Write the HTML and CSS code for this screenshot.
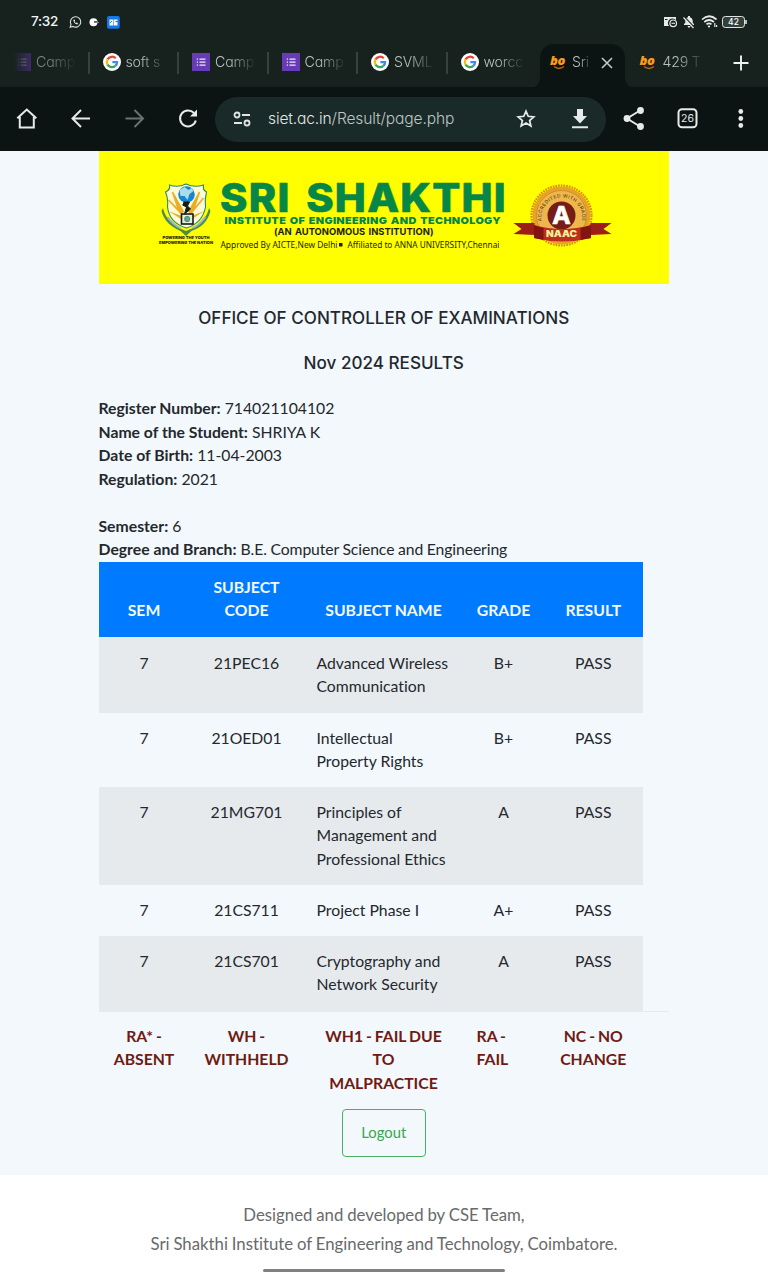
FILE: index.html
```html
<!DOCTYPE html>
<html lang="en">
<head>
<meta charset="utf-8">
<title>Exam Results</title>
<link rel="stylesheet" href="styles.css">
</head>
<body>
<svg class="defs" aria-hidden="true">
  <symbol id="google" viewBox="0 0 48 48">
    <circle cx="24" cy="24" r="24" fill="#fff"/>
    <g fill="none" stroke-width="6">
      <path d="M12 17A14 14 0 0 1 34 14" stroke="#ea4335"/>
      <path d="M12 31A14 14 0 0 1 12 17" stroke="#fbbc05"/>
      <path d="M33 34.500A14 14 0 0 1 12 31" stroke="#34a853"/>
      <path d="M25 24.500H37.500A14 14 0 0 1 33 34.500" stroke="#4285f4"/>
    </g>
  </symbol>
  <symbol id="forms" viewBox="0 0 18 18">
    <path d="M0 0H18V18H0Z" fill="#673ab7"/>
    <path d="M7.500 6.200H13.500M7.500 9.200H13.500M7.500 12.200H13.500" stroke="#eee" stroke-width="1.200"/>
    <path d="M4.800 6.200H6M4.800 9.200H6M4.800 12.200H6" stroke="#eee" stroke-width="1.300"/>
  </symbol>
</svg>

<header class="browser">
  <div class="status">
    <span class="clock">7:32</span>
    <svg class="status-left" width="56" height="16" viewBox="67 13 56 16">
      <path d="M70.200 26.200L71 23.300A5.200 5.200 0 1 1 73 25.400Z" fill="none" stroke="#dde3e2" stroke-width="1.100"/>
      <path d="M73.300 18.800Q73.500 23 77.500 23.400L78 22L76.600 21.400L76 22Q75 21.500 74.600 20.400L75.200 19.800L74.600 18.400Z" fill="#dde3e2"/>
      <circle cx="93.500" cy="21.300" r="4" fill="#fff"/><path d="M94 20.300H97V21.600H94Z" fill="#17221f"/><path d="M96 21.500H99" stroke="#889" stroke-width="1"/>
      <rect x="107" y="15" width="12.800" height="12.800" rx="2" fill="#1778e8"/>
      <path d="M109.500 18.500H113.500V24.500H109.500ZM114 18.500H117.500V20H115.500V21H117.500V24.500H114Z" fill="#f2f7ff"/>
      <path d="M110 22L112 20" stroke="#1778e8" stroke-width=".8"/>
    </svg>
    <svg class="status-right" width="90" height="18" viewBox="660 12 90 18">
      <path d="M664 16H676V19A4 4 0 0 0 669 25H664Z" fill="#e6eae9"/><path d="M665 18.500H667.500" stroke="#17221f"/>
      <circle cx="673.200" cy="22.300" r="3.300" fill="#17221f" stroke="#e6eae9" stroke-width="1.200"/><path d="M671.500 22.300H675" stroke="#e6eae9" stroke-width="1.100"/>
      <path d="M684 24V23L685.300 21.700V19.500Q685.500 16.800 688 16.200V15H690V16.200Q692.700 16.900 692.700 19.500V21.700L694 23V24ZM687.500 25H690.500Q690 26.800 689 26.800Q688 26.800 687.500 25Z" fill="#e6eae9"/>
      <path d="M684 15.500L694.500 26.500" stroke="#17221f" stroke-width="1.200"/><path d="M683.500 16.500L693.500 27" stroke="#e6eae9" stroke-width="1.200"/>
      <g fill="none" stroke="#e6eae9" stroke-width="1.700"><path d="M702 18.500Q709 12 716.500 18.500M704.300 21Q709 17 714 21M706.500 23.300Q709 21.300 711.500 23.300"/></g>
      <circle cx="709" cy="25.500" r="1.100" fill="#e6eae9"/><path d="M714.800 22V26M716.600 24V26" stroke="#e6eae9" stroke-width="1.200"/>
      <rect x="722.500" y="15.500" width="22" height="11" rx="2.800" fill="#33413e" stroke="#dfe4e3"/><path d="M746 19V23" stroke="#dfe4e3" stroke-width="1.600"/>
      <text x="733.500" y="24.200" text-anchor="middle" font-family="Inter, sans-serif" font-size="8.500" font-weight="500" fill="#fff">42</text>
    </svg>
  </div>

  <nav class="tabs">
    <div class="tab ghost"><svg class="fav"><use href="#forms"/></svg><span class="label">Camp</span></div>
    <div class="tab"><svg class="fav"><use href="#google"/></svg><span class="label">soft s</span></div>
    <div class="tab"><svg class="fav"><use href="#forms"/></svg><span class="label">Camp</span></div>
    <div class="tab"><svg class="fav"><use href="#forms"/></svg><span class="label">Camp</span></div>
    <div class="tab"><svg class="fav"><use href="#google"/></svg><span class="label">SVML</span></div>
    <div class="tab last"><svg class="fav"><use href="#google"/></svg><span class="label">worcc</span></div>
    <div class="tab active">
      <svg class="shape" width="105" height="44" viewBox="0 0 105 44"><path d="M0 44Q10 43 10 33V14Q11 1 23 0H82Q94 1 95 14V33Q95 43 105 44Z" fill="#0c1413"/></svg>
      <span class="fav bo">bo<svg width="12" height="4" viewBox="0 0 12 4"><path d="M1 .5Q6 4.500 11 .5" fill="none" stroke="#b96a1c" stroke-width="1.300"/></svg></span><span class="label">Sri</span>
      <svg class="close" width="12" height="12" viewBox="0 0 12 12"><path d="M1 1L11 11M11 1L1 11" stroke="#c2c9c7" stroke-width="1.600"/></svg>
    </div>
    <div class="tab last"><span class="fav bo">bo<svg width="12" height="4" viewBox="0 0 12 4"><path d="M1 .5Q6 4.500 11 .5" fill="none" stroke="#b96a1c" stroke-width="1.300"/></svg></span><span class="label">429 T</span></div>
    <svg class="plus" width="16" height="16" viewBox="0 0 16 16"><path d="M8 .5V15.500M.5 8H15.500" stroke="#eef2f1" stroke-width="1.900"/></svg>
  </nav>

  <div class="toolbar">
    <svg class="nav-icons" width="215" height="64" viewBox="0 87 215 64" fill="none" stroke="#e6ebea" stroke-width="2">
      <path d="M17.300 118.300L26.800 109.500L36.300 118.300M19.800 117V127.500H33.800V117"/>
      <path d="M90 118.500H73M81 110L72.500 118.500L81 127"/>
      <path d="M125.500 118.500H142.500M134.500 110L143 118.500L134.500 127" stroke="#69726f"/>
      <path d="M194 113A8 8 0 1 0 195.800 120.500"/><path d="M197 109.500V116.500H190Z" fill="#e6ebea" stroke="none"/>
    </svg>
    <div class="address">
      <svg width="19" height="16" viewBox="0 0 19 16" fill="none" stroke="#dfe6e4" stroke-width="1.800"><circle cx="4" cy="4" r="2.500"/><path d="M9 4H17M1 12H9"/><circle cx="14" cy="12" r="2.500"/></svg>
      <span class="url">siet.ac.in<span class="path">/Result/page.php</span></span>
      <svg class="star" width="20" height="20" viewBox="0 0 20 20" fill="none" stroke="#e6ebea" stroke-width="1.700"><path d="M10 2.200L12.200 7.300L17.800 7.800L13.600 11.500L14.900 17L10 14.100L5.100 17L6.400 11.500L2.200 7.800L7.800 7.300Z"/></svg>
      <svg class="download" width="18" height="20" viewBox="0 0 18 20"><path d="M6 0H12V7H16L9 14.500L2 7H6ZM1 17.300H17V19.300H1Z" fill="#e6ebea"/></svg>
    </div>
    <svg class="tools" width="162" height="64" viewBox="606 87 162 64">
      <path d="M640 110.500L627 118.500L640 126.500" fill="none" stroke="#e6ebea" stroke-width="1.900"/>
      <g fill="#e6ebea"><circle cx="640.500" cy="110.500" r="3.400"/><circle cx="627" cy="118.500" r="3.400"/><circle cx="640.500" cy="126.500" r="3.400"/><circle cx="740.800" cy="111.500" r="2.400"/><circle cx="740.800" cy="118.500" r="2.400"/><circle cx="740.800" cy="125.500" r="2.400"/></g>
      <rect x="678.500" y="109.300" width="18" height="18" rx="3.500" fill="none" stroke="#e6ebea" stroke-width="2"/>
      <text x="687.500" y="122.300" text-anchor="middle" font-family="Inter, sans-serif" font-size="10.500" fill="#e6ebea">26</text>
    </svg>
  </div>
</header>

<main class="page">
  <div class="banner">
    <svg width="571" height="133" viewBox="98.500 151 571 133">
      <path d="M162.500 208Q166 224 185.500 231Q205 224 208.500 208L210 211Q206 226 191 231L185.500 236L180 231Q164 224 161 211Z" fill="#4c8e45"/>
      <path d="M169 185Q177 188 185.500 184Q194 188 203 185Q202 190 206 192Q204 199 205 207Q202 223 186 228Q169 223 167 207Q168 199 165 192Q170 190 169 185Z" fill="#fffbd6" stroke="#288a69" stroke-width="1.100"/>
      <path d="M181 214L168 200L178 210L172 192L183 212M190 214L203 198L193 210L199 192L188 212" fill="#e9ad27" stroke="#e9ad27" stroke-width="1.500"/>
      <path d="M182 220L168 211L181 216M190 220L204 211L191 216" fill="#e9ad27"/>
      <circle cx="186" cy="194.500" r="8.300" fill="#1687cf"/><path d="M179 190L184 187L188 190L191 188L193 191L189 194L187 200L184 196L180 196Z" fill="#a9dced"/>
      <path d="M183 202H189L187 206L190 209L184 214L186 207L182 205" fill="#151b19" stroke="#151b19"/>
      <rect x="181" y="214" width="11.500" height="10" fill="#e7eee0" stroke="#151b19" stroke-width="1.600"/><circle cx="186.700" cy="219" r="3" fill="#3f8771"/><path d="M185 218H189M185 220H189" stroke="#dcebd2" stroke-width=".6"/>
      <path d="M167 217Q174 226 180 228M205 217Q198 226 192 228" stroke="#98b4d1" stroke-width="2" fill="none"/>
      <g font-family="Inter, sans-serif">
        <g font-size="4" font-weight="900" fill="#302b00"><text x="162" y="239" textLength="47" lengthAdjust="spacingAndGlyphs">POWERING THE YOUTH</text><text x="158.500" y="243.700" textLength="54" lengthAdjust="spacingAndGlyphs">EMPOWERING THE NATION</text></g>
        <g fill="#068747" font-weight="900"><text x="219.500" y="212.200" font-size="39" font-weight="800" stroke="#068747" stroke-width=".7" letter-spacing="1.200" word-spacing="5" textLength="287" lengthAdjust="spacingAndGlyphs">SRI SHAKTHI</text>
        <text x="224" y="223.500" font-size="9.600" letter-spacing=".3" word-spacing="1" textLength="276.500" lengthAdjust="spacingAndGlyphs">INSTITUTE OF ENGINEERING AND TECHNOLOGY</text></g>
        <text x="273.500" y="235" font-size="9.300" font-weight="700" fill="#1e1e00" word-spacing="1" textLength="159.500" lengthAdjust="spacingAndGlyphs">(AN AUTONOMOUS INSTITUTION)</text>
      </g>
      <g font-family="Noto Sans, sans-serif" font-size="8.700" fill="#1e1e00"><text x="220" y="248" textLength="117" lengthAdjust="spacingAndGlyphs">Approved By AICTE,New Delhi</text><text x="347" y="248.300" textLength="152" lengthAdjust="spacingAndGlyphs">Affiliated to ANNA UNIVERSITY,Chennai</text></g>
      <rect x="338.500" y="243" width="3.500" height="3.500" fill="#1e1e00"/>
      <circle cx="561" cy="215.500" r="30" fill="none" stroke="#d58d18" stroke-width="2.200" stroke-dasharray="1.700 1"/>
      <circle cx="561" cy="215.500" r="29" fill="#e6a22b"/><circle cx="561" cy="215.500" r="25" fill="#efb64c" stroke="#c78320" stroke-width=".7"/>
      <path id="arc" d="M541 221A20.500 20.500 0 1 1 581.500 221" fill="none"/>
      <text font-family="Inter, sans-serif" font-size="4.700" fill="#422709"><textPath href="#arc" textLength="70">ACCREDITED WITH GRADE</textPath></text>
      <circle cx="561" cy="215.500" r="14" fill="#751c16"/>
      <text x="561" y="224" text-anchor="middle" font-family="Noto Sans, sans-serif" font-size="25" font-weight="700" fill="#fff" stroke="#fff" stroke-width=".7">A</text>
      <path d="M513 223H534V235L513 234L521 229ZM611 223H590V235L611 234L603 229Z" fill="#9d1d18"/>
      <path d="M533.500 225Q561.500 233 590.500 225V238Q561.500 245 533.500 238Z" fill="#bd2e20"/>
      <path d="M533.500 225Q538 227 543 228V240L533.500 238ZM590.500 225Q585 227 580 228V240L590.500 238Z" fill="#82150f"/>
      <text x="545.500" y="237" font-family="Inter, sans-serif" font-size="8.700" font-weight="900" fill="#fff29a" textLength="31" lengthAdjust="spacingAndGlyphs">NAAC</text>
    </svg>
  </div>
  <h1 class="heading">OFFICE OF CONTROLLER OF EXAMINATIONS</h1>
  <h2 class="heading term">Nov 2024 RESULTS</h2>
  <section class="details">
    <div><b>Register Number:</b> 714021104102</div>
    <div><b>Name of the Student:</b> SHRIYA K</div>
    <div><b>Date of Birth:</b> 11-04-2003</div>
    <div><b>Regulation:</b> 2021</div>
    <div class="semester"><b>Semester:</b> 6</div>
    <div><b>Degree and Branch:</b> <span class="branch">B.E. Computer Science and Engineering</span></div>
  </section>
  <table class="results">
    <colgroup><col class="c-sem"><col class="c-code"><col class="c-name"><col class="c-grade"><col class="c-result"></colgroup>
    <thead><tr class="h75"><th>SEM</th><th>SUBJECT<br>CODE</th><th>SUBJECT NAME</th><th>GRADE</th><th>RESULT</th></tr></thead>
    <tbody>
      <tr class="h76 odd"><td>7</td><td>21PEC16</td><td>Advanced Wireless<br>Communication</td><td>B+</td><td>PASS</td></tr>
      <tr class="h74"><td>7</td><td>21OED01</td><td>Intellectual<br>Property Rights</td><td>B+</td><td>PASS</td></tr>
      <tr class="h98 odd"><td>7</td><td>21MG701</td><td>Principles of<br>Management and<br>Professional Ethics</td><td>A</td><td>PASS</td></tr>
      <tr class="h51"><td>7</td><td>21CS711</td><td>Project Phase I</td><td>A+</td><td>PASS</td></tr>
      <tr class="h75 odd"><td>7</td><td>21CS701</td><td>Cryptography and<br>Network Security</td><td>A</td><td>PASS</td></tr>
    </tbody>
  </table>
  <div class="legend">
    <span>RA* -<br>ABSENT</span><span>WH -<br>WITHHELD</span><span>WH1 - FAIL DUE<br>TO<br>MALPRACTICE</span><span class="fail">RA -<br>FAIL</span><span>NC - NO<br>CHANGE</span>
  </div>
  <button class="logout">Logout</button>
</main>

<footer class="footer">
  <p>Designed and developed by CSE Team,</p>
  <p>Sri Shakthi Institute of Engineering and Technology, Coimbatore.</p>
  <div class="handle"></div>
</footer>
</body>
</html>
```

FILE: styles.css
```css
* { box-sizing: border-box; }
body { margin: 0; width: 768px; height: 1280px; overflow: hidden; background: #fff; color: #24282d; font: 15.75px/23.65px Lato, sans-serif; font-variant-ligatures: none; }
svg { display: block; flex: none; }
.defs { position: absolute; width: 0; height: 0; }

.browser { height: 151px; background: #17221f; font-family: Inter, sans-serif; font-feature-settings: "cv11"; }
.status { height: 43px; display: flex; align-items: center; padding-left: 31px; }
.clock { width: 27px; font-size: 13.5px; font-weight: 500; letter-spacing: -.3px; color: #f3f6f5; white-space: nowrap; }
.status-left { margin-left: 9px; }
.status-right { margin-left: auto; margin-right: 18px; }

.tabs { height: 44px; display: flex; padding-left: 13px; }
.tab { position: relative; width: 89.5px; height: 44px; flex: none; display: flex; align-items: center; padding-bottom: 6px; }
.tab::after { content: ""; position: absolute; right: 13px; top: 9px; width: 2px; height: 22px; background: #35423f; }
.tab.active::after, .tab.last::after { display: none; }
.fav { width: 18px; height: 18px; position: relative; flex: none; }
.bo { height: 17px; font: italic 800 13px/13px "Open Sans", sans-serif; letter-spacing: -.5px; color: #fb9b1c; }
.bo svg { margin-left: 3px; margin-top: -1px; }
.label { width: 40px; margin-left: 5px; overflow: hidden; white-space: nowrap; position: relative; font-size: 14.2px; font-weight: 300; letter-spacing: -.2px; color: #b9c1bf; -webkit-mask-image: linear-gradient(90deg, #000 35%, transparent 103%); mask-image: linear-gradient(90deg, #000 35%, transparent 103%); }
.ghost .fav { opacity: .45; -webkit-mask-image: linear-gradient(90deg, transparent, #000); mask-image: linear-gradient(90deg, transparent, #000); }
.ghost .label { opacity: .6; }
.active .shape { position: absolute; left: -20px; top: 1px; }
.active .label { width: 20px; margin-left: 4px; }
.close { position: relative; margin: 2px 0 0 9px; }
.plus { margin: 12px 0 0 4px; }

.toolbar { height: 64px; display: flex; align-items: center; background: #0c1413; }
.address { width: 391.5px; height: 45px; border-radius: 23px; background: #1a2a29; display: flex; align-items: center; padding-left: 18px; }
.url { width: 187px; margin-left: 16px; font-size: 15.6px; font-weight: 300; letter-spacing: -.15px; white-space: nowrap; color: #e1e7e5; }
.path { color: #bcc7c4; }
.star { margin-left: 61px; }
.download { margin-left: 35px; }

.page { height: 1024px; padding: 0 99px 0 98.5px; background: #f2f8fc; }
.banner { height: 133px; background: #ff0; overflow: hidden; }
.heading { margin: 22.500px 0 0; font: 500 17.1px/22px Inter, sans-serif; text-align: center; white-space: nowrap; }
.heading.term { margin-top: 23px; }
.details { margin-top: 22.500px; white-space: nowrap; }
.details b { font-weight: 700; }
.branch { letter-spacing: -.1px; word-spacing: -.3px; }
.semester { margin-top: 23px; }
.results { width: 544.5px; table-layout: fixed; border-collapse: collapse; margin-top: 1.200px; }
.c-sem { width: 91px; }
.c-code { width: 114px; }
.c-name { width: 160px; }
.c-grade { width: 80px; }
.c-result { width: 99.5px; }
.results th { padding: 0 0 15px; vertical-align: bottom; background: #007bff; color: #f3f9ff; }
.results td { padding: 12.500px 0 0; vertical-align: top; text-align: center; white-space: nowrap; }
.results .h76 td { padding-top: 13.500px; }
.results td:nth-child(3) { text-align: left; padding-left: 13px; }
.odd { background: #e6eaed; }
.h51 { height: 51px; }
.h74 { height: 74px; }
.h75 { height: 75px; }
.h76 { height: 76px; }
.h98 { height: 98px; }
.legend { display: grid; grid-template-columns: 91px 114px 160px 80px 99.5px; padding-top: 11.500px; border-top: 1px solid #e5eaee; color: #701a12; font-weight: 700; text-align: center; white-space: nowrap; word-spacing: -.9px; }
.legend .fail { text-align: left; padding-left: 13px; }
.logout { display: block; width: 84px; height: 48px; margin: 14px auto 0; padding: 0 0 1px; border: 1px solid #4caf66; border-radius: 4px; background: transparent; color: #37a750; font: 14.800px Lato, sans-serif; }
.footer { height: 105px; padding-top: 25px; color: #686a6c; text-align: center; font-size: 16.75px; line-height: 29px; word-spacing: -.4px; }
.footer p { margin: 0; }
.handle { width: 242px; height: 3px; border-radius: 2px; background: #808080; margin: 11px auto 0; }
```
